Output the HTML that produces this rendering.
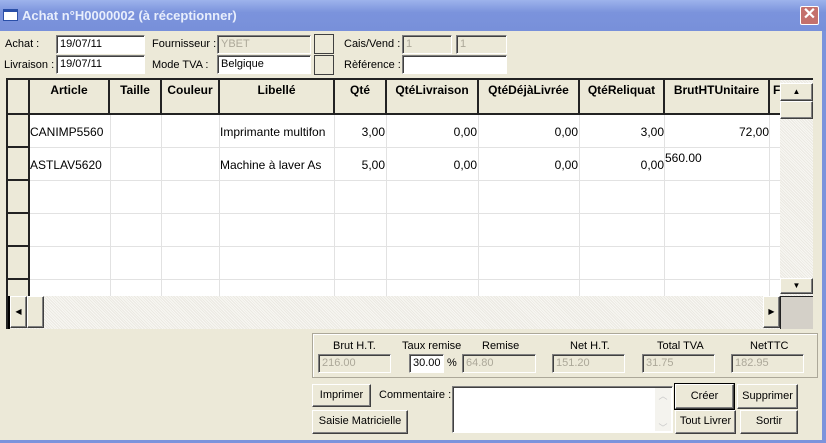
<!DOCTYPE html>
<html><head><meta charset="utf-8"><style>
*{box-sizing:border-box;margin:0;padding:0}
body{width:826px;height:443px;overflow:hidden;background:#ece9d8;font-family:"Liberation Sans",sans-serif;font-size:11px;color:#000;position:relative}
.a{position:absolute}
.title{left:0;top:0;width:826px;height:31px;background:linear-gradient(#9db3ec,#7b93dc 40%,#7890da);color:#e8eefc;font-weight:bold;font-size:13px}
.inp{position:absolute;height:19px;background:#fff;border:1px solid #7f7f7f;border-right-color:#fff;border-bottom-color:#fff;box-shadow:inset 1px 1px 0 #404040;padding:2px 0 0 3px;font-size:11px;white-space:nowrap;overflow:hidden}
.dis{background:#ece9d8;color:#aca899}
.btn{position:absolute;border:1px solid #fff;border-right-color:#404040;border-bottom-color:#404040;box-shadow:inset -1px -1px 0 #808080;background:#ece9d8;text-align:center;font-size:11px}
.sq{position:absolute;width:20px;height:20px;border:1px solid #404040;background:#ece9d8}
.hd{position:absolute;top:0;height:35px;border-right:2px solid #222;border-bottom:2px solid #222;font-weight:bold;font-size:12px;text-align:center;padding-top:3px;background:#ece9d8}
.rh{position:absolute;left:0;width:22px;height:33px;border-right:2px solid #222;border-bottom:2px solid #222;background:#ece9d8}
.hatch{background:repeating-linear-gradient(45deg,#ebe9e2 0 1px,#f8f7f3 1px 2px)}
.c{position:absolute;font-size:12px}
</style></head><body>
<div class="a title"><div class="a" style="left:3px;top:9px;width:15px;height:12px;background:#fff;border:1px solid #2a4fa8;border-top-width:3px"></div><div class="a" style="left:22px;top:8px">Achat n°H0000002 (à réceptionner)</div>
<div class="a" style="left:800px;top:6px;width:19px;height:19px;background:#c4706c;border:1px solid #fff;border-radius:2px;color:#fff;font-size:16px;line-height:16px;text-align:center">✕</div></div>
<div class="a" style="left:822px;top:31px;width:4px;height:412px;background:#7b93dc"></div>
<div class="a" style="left:0;top:440px;width:826px;height:3px;background:#7b93dc"></div>

<div class="a" style="left:5px;top:38px">Achat :</div>
<div class="inp" style="left:56px;top:35px;width:89px">19/07/11</div>
<div class="a" style="left:4px;top:59px">Livraison :</div>
<div class="inp" style="left:56px;top:55px;width:89px">19/07/11</div>
<div class="a" style="left:152px;top:38px">Fournisseur :</div>
<div class="inp dis" style="left:217px;top:35px;width:94px">YBET</div>
<div class="a" style="left:152px;top:59px">Mode TVA :</div>
<div class="inp" style="left:217px;top:55px;width:94px">Belgique</div>
<div class="sq" style="left:314px;top:34px"></div>
<div class="sq" style="left:314px;top:55px"></div>
<div class="a" style="left:344px;top:38px">Cais/Vend :</div>
<div class="inp dis" style="left:402px;top:35px;width:50px">1</div>
<div class="inp dis" style="left:456px;top:35px;width:51px">1</div>
<div class="a" style="left:344px;top:59px">Rèférence :</div>
<div class="inp" style="left:402px;top:55px;width:105px"></div>

<!-- grid -->
<div class="a" style="left:6px;top:78px;width:807px;height:251px;background:#fff;border-left:2px solid #222;border-top:2px solid #222;overflow:hidden">
<div class="a" style="left:0;top:0;width:772px;height:216px;background:
repeating-linear-gradient(#fff 0 32px,#e2e2e2 32px 33px);background-position:0 2px"></div>
<div class="hd" style="left:0;width:22px"></div>
<div class="hd" style="left:22px;width:80px">Article</div>
<div class="hd" style="left:102px;width:52px">Taille</div>
<div class="hd" style="left:154px;width:58px">Couleur</div>
<div class="hd" style="left:212px;width:115px">Libellé</div>
<div class="hd" style="left:327px;width:52px">Qté</div>
<div class="hd" style="left:379px;width:92px">QtéLivraison</div>
<div class="hd" style="left:471px;width:101px">QtéDéjàLivrée</div>
<div class="hd" style="left:572px;width:85px">QtéReliquat</div>
<div class="hd" style="left:657px;width:105px">BrutHTUnitaire</div>
<div class="hd" style="left:762px;width:20px;text-align:left;padding-left:3px">F</div>
<div class="rh" style="top:35px"></div><div class="rh" style="top:68px"></div><div class="rh" style="top:101px"></div><div class="rh" style="top:134px"></div><div class="rh" style="top:167px"></div><div class="rh" style="top:200px;height:18px"></div>
<div class="a" style="left:102px;top:35px;width:1px;height:181px;background:#e2e2e2"></div>
<div class="a" style="left:153px;top:35px;width:1px;height:181px;background:#e2e2e2"></div>
<div class="a" style="left:211px;top:35px;width:1px;height:181px;background:#e2e2e2"></div>
<div class="a" style="left:326px;top:35px;width:1px;height:181px;background:#e2e2e2"></div>
<div class="a" style="left:378px;top:35px;width:1px;height:181px;background:#e2e2e2"></div>
<div class="a" style="left:470px;top:35px;width:1px;height:181px;background:#e2e2e2"></div>
<div class="a" style="left:571px;top:35px;width:1px;height:181px;background:#e2e2e2"></div>
<div class="a" style="left:656px;top:35px;width:1px;height:181px;background:#e2e2e2"></div>
<div class="a" style="left:761px;top:35px;width:1px;height:181px;background:#e2e2e2"></div>
<div class="c" style="left:22px;top:45px">CANIMP5560</div>
<div class="c" style="left:212px;top:45px">Imprimante multifon</div>
<div class="c" style="left:327px;top:45px;width:50px;text-align:right">3,00</div>
<div class="c" style="left:379px;top:45px;width:90px;text-align:right">0,00</div>
<div class="c" style="left:471px;top:45px;width:99px;text-align:right">0,00</div>
<div class="c" style="left:572px;top:45px;width:84px;text-align:right">3,00</div>
<div class="c" style="left:657px;top:45px;width:104px;text-align:right">72,00</div>
<div class="c" style="left:22px;top:78px">ASTLAV5620</div>
<div class="c" style="left:212px;top:78px">Machine à laver As</div>
<div class="c" style="left:327px;top:78px;width:50px;text-align:right">5,00</div>
<div class="c" style="left:379px;top:78px;width:90px;text-align:right">0,00</div>
<div class="c" style="left:471px;top:78px;width:99px;text-align:right">0,00</div>
<div class="c" style="left:572px;top:78px;width:84px;text-align:right">0,00</div>
<div class="c" style="left:657px;top:71px">560.00</div>
<!-- vscroll -->
<div class="a hatch" style="left:772px;top:0;width:33px;height:216px"></div>
<div class="btn" style="left:772px;top:3px;width:33px;height:18px;font-size:8px;line-height:16px">▲</div>
<div class="btn" style="left:772px;top:21px;width:33px;height:18px"></div>
<div class="btn" style="left:772px;top:198px;width:33px;height:16px;font-size:8px;line-height:14px">▼</div>
<!-- hscroll -->
<div class="a hatch" style="left:0;top:216px;width:772px;height:33px"></div>
<div class="a" style="left:0;top:216px;width:2px;height:33px;background:#000"></div>
<div class="btn" style="left:2px;top:216px;width:17px;height:32px;font-size:8px;line-height:30px">◀</div>
<div class="btn" style="left:19px;top:216px;width:17px;height:32px"></div>
<div class="btn" style="left:755px;top:216px;width:17px;height:32px;font-size:8px;line-height:30px">▶</div>
<div class="a" style="left:772px;top:216px;width:35px;height:33px;background:#d4d0c8;border-left:1px solid #222;border-top:1px solid #222"></div>
</div>

<!-- totals -->
<div class="a" style="left:312px;top:333px;width:506px;height:45px;border:1px solid #aca899;box-shadow:inset 1px 1px 0 #fff"></div>
<div class="a" style="left:333px;top:340px">Brut H.T.</div>
<div class="a" style="left:402px;top:340px">Taux remise</div>
<div class="a" style="left:482px;top:340px">Remise</div>
<div class="a" style="left:570px;top:340px">Net H.T.</div>
<div class="a" style="left:657px;top:340px">Total TVA</div>
<div class="a" style="left:750px;top:340px">NetTTC</div>
<div class="inp dis" style="left:318px;top:354px;width:73px">216.00</div>
<div class="inp" style="left:409px;top:354px;width:35px">30.00</div>
<div class="a" style="left:447px;top:357px">%</div>
<div class="inp dis" style="left:462px;top:354px;width:74px">64.80</div>
<div class="inp dis" style="left:552px;top:354px;width:73px">151.20</div>
<div class="inp dis" style="left:642px;top:354px;width:73px">31.75</div>
<div class="inp dis" style="left:731px;top:354px;width:73px">182.95</div>

<div class="btn" style="left:312px;top:384px;width:59px;height:23px;line-height:20px">Imprimer</div>
<div class="a" style="left:379px;top:389px">Commentaire :</div>
<div class="inp" style="left:452px;top:386px;width:221px;height:47px"></div>
<div class="a" style="left:655px;top:388px;width:16px;height:43px;background:#f4f3ee;color:#c8c8c8;font-size:9px;text-align:center;line-height:16px">︿<br><br>﹀</div>
<div class="btn" style="left:312px;top:410px;width:96px;height:24px;line-height:21px">Saisie Matricielle</div>
<div class="btn" style="left:675px;top:384px;width:59px;height:25px;line-height:22px;outline:1px solid #000">Créer</div>
<div class="btn" style="left:737px;top:384px;width:61px;height:25px;line-height:22px">Supprimer</div>
<div class="btn" style="left:675px;top:410px;width:61px;height:24px;line-height:21px">Tout Livrer</div>
<div class="btn" style="left:740px;top:410px;width:58px;height:24px;line-height:21px">Sortir</div>
</body></html>
